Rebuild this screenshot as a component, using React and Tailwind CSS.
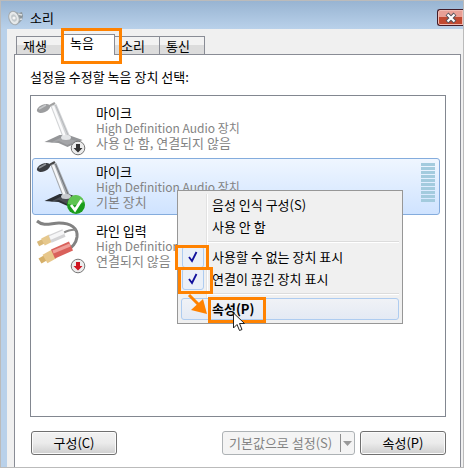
const devices = [
  { id: 'mic-off', name: '마이크', driver: 'High Definition Audio 장치', status: '사용 안 함, 연결되지 않음', kind: 'mic', badge: 'disabled' },
  { id: 'mic', name: '마이크', driver: 'High Definition Audio 장치', status: '기본 장치', kind: 'mic', badge: 'default', selected: true },
  { id: 'line', name: '라인 입력', driver: 'High Definition Audio 장치', status: '연결되지 않음', kind: 'line', badge: 'unplugged' },
]

function SoundIcon() {
  return (
    <svg className="h-4 w-4" viewBox="0 0 16 16" aria-hidden="true">
      <path d="M7 2l4 1 3-1 1 4-1 4-3 3-4 1z" fill="#8d969b" />
      <path d="M10 4l4 1M10 10l4-1" stroke="#dfe3e5" strokeWidth="1.5" />
      <ellipse cx="6" cy="8" rx="5" ry="7" transform="rotate(-20 6 8)" fill="#e6e9ea" stroke="#a2a9ad" />
      <ellipse cx="6" cy="8" rx="2.6" ry="3.8" transform="rotate(-20 6 8)" fill="#c3c9cc" />
      <circle cx="6" cy="8" r="1.6" fill="#f6f6f6" />
    </svg>
  )
}

function Badge({ type }) {
  if (type === 'default') {
    return (
      <g>
        <circle cx="40" cy="46" r="9" fill="#1a9c1c" />
        <path d="M32 45a8 8 0 0 1 16-2q-7 5-16 2z" fill="#5fc452" />
        <path d="M35 46l4 5 6.5-10" fill="none" stroke="#fff" strokeWidth="2.8" />
      </g>
    )
  }
  return (
    <g>
      <circle cx="42" cy="48" r="6.8" fill="#ececec" stroke="#777" />
      <path
        d="M40 44h4v4h2.500l-4.500 4.500-4.500-4.500h2.500z"
        fill={type === 'unplugged' ? '#cf1420' : '#333'}
      />
    </g>
  )
}

function Mic({ faded }) {
  return (
    <g opacity={faded ? 0.5 : 1}>
      <path d="M8.500 42l15-7 9 0 14 5-15 7-9-4z" fill="#2b2e33" />
      <path d="M14 43l10-5 9 1 8 2-10 4-8-4z" fill="#4b4e54" />
      <path d="M10 8l9-5" stroke="#444" strokeWidth="2.500" />
      <path d="M14.500 6l6-2 13 31q-3 4-7 2z" fill="#a6aaae" />
      <path d="M17 6l12 31" stroke="#f6f7f8" strokeWidth="2.500" />
      <path d="M19.500 5l12.500 30" stroke="#70747a" strokeWidth="1" />
      <ellipse cx="7.500" cy="8.500" rx="7" ry="3.800" transform="rotate(-24 7.500 8.500)" fill="#3b3d41" />
      <path d="M3 9l7-4" stroke="#8c9095" strokeWidth="1.500" />
      <ellipse cx="30" cy="37.500" rx="5" ry="2.500" fill="#c9ccd0" />
    </g>
  )
}

function Line() {
  return (
    <g fill="none">
      <path d="M1 3c7 6 14 2 22 2 12 0 19 5 18 14-1 7-5 10-10 14" stroke="#828282" strokeWidth="3" />
      <path d="M27 15q8-4 13-3" stroke="#8c8c8c" strokeWidth="2" />
      <path d="M2 26l6-3" stroke="#d9b878" strokeWidth="5" />
      <path d="M7 24l8-4" stroke="#e6c88d" strokeWidth="8" />
      <path d="M14 21l14-6" stroke="#d4d4d6" strokeWidth="8" />
      <path d="M14 20l14-6" stroke="#f6f6f7" strokeWidth="4" />
      <path d="M4 43l7-4" stroke="#d6b069" strokeWidth="6" />
      <path d="M9 41l9-5" stroke="#e7c78b" strokeWidth="10" />
      <path d="M17 36l18-8" stroke="#d9615b" strokeWidth="10" />
      <path d="M17 34l17-7" stroke="#efa09a" strokeWidth="3" />
    </g>
  )
}

function DeviceIcon({ kind, badge }) {
  return (
    <svg className="h-14 w-13 shrink-0" viewBox="0 0 52 56" aria-hidden="true">
      {kind === 'mic' ? <Mic faded={badge === 'disabled'} /> : <Line />}
      <Badge type={badge} />
    </svg>
  )
}

function LevelMeter() {
  return (
    <div className="mt-1 mr-1 flex w-[14px] flex-col gap-px">
      {Array.from({ length: 10 }, (_, i) => (
        <span key={i} className="h-[3px] bg-[#a3cbde]" />
      ))}
    </div>
  )
}

function Device({ device, children }) {
  return (
    <li
      className={`relative flex h-[57px] rounded-[3px] border pl-[3px] ${
        device.selected ? 'border-[#84acdd] bg-linear-to-b from-[#eff6ff] to-[#cfe3ff]' : 'border-transparent'
      }`}
    >
      <DeviceIcon kind={device.kind} badge={device.badge} />
      <div className="flex-1 pt-[5px] pl-2 leading-[15px] whitespace-nowrap text-[#838383]">
        <p className="text-black">{device.name}</p>
        <p className="text-[12px] leading-[15px]">{device.driver}</p>
        <p>{device.status}</p>
      </div>
      {device.selected && <LevelMeter />}
      {children}
    </li>
  )
}

function Highlight({ className }) {
  return <span className={`pointer-events-none absolute z-10 border-[3px] border-[#ff8200] ${className}`} />
}

function MenuItem({ children, checked, bold, mark }) {
  return (
    <button
      type="button"
      role={checked ? 'menuitemcheckbox' : 'menuitem'}
      aria-checked={checked}
      className={`relative flex h-[22px] w-full items-center rounded-[3px] border text-left ${
        bold ? 'border-[#aeccf0] bg-linear-to-b from-[#f0f2f6] to-[#e4eaf4] font-bold' : 'border-transparent'
      }`}
    >
      <span className="flex w-[30px] shrink-0 justify-center">
        {checked && (
          <span className="mr-2 flex h-[22px] w-[22px] shrink-0 items-center justify-center rounded-[3px] border border-[#aeccf0] bg-[#eaf0f8]">
            <svg className="h-3 w-3" viewBox="0 0 12 12" aria-hidden="true">
              <path d="M2 6l3 4 4.500-9" fill="none" stroke="#10109c" strokeWidth="1.800" />
            </svg>
          </span>
        )}
      </span>
      {children}
      {mark}
    </button>
  )
}

function Separator() {
  return <div role="separator" className="my-[3px] ml-[27px] h-[2px] border-t border-[#dcdcdc] bg-white" />
}

function ContextMenu() {
  return (
    <div
      role="menu"
      className="absolute top-[31px] left-[144px] z-20 w-[226px] border border-[#979797] bg-[#f0f0f0] p-[3px] text-black"
    >
      <span className="absolute top-[3px] bottom-[3px] left-[28px] w-[2px] border-l border-[#e2e2e2] bg-white" />
      <MenuItem>음성 인식 구성(S)</MenuItem>
      <MenuItem>사용 안 함</MenuItem>
      <Separator />
      <MenuItem checked mark={<Highlight className="-top-[2px] -left-[7px] h-[25px] w-[34px]" />}>
        사용할 수 없는 장치 표시
      </MenuItem>
      <MenuItem checked mark={<Highlight className="-top-[2px] -left-[4px] h-[27px] w-[35px]" />}>
        연결이 끊긴 장치 표시
      </MenuItem>
      <Separator />
      <MenuItem
        bold
        mark={
          <>
            <Highlight className="-top-[2px] left-[26px] h-[26px] w-[58px]" />
            <svg className="absolute -top-[6px] left-[4px] z-10 h-6 w-6" viewBox="0 0 24 24" aria-hidden="true">
              <path d="M3 2l11 11" stroke="#ff8200" strokeWidth="3" />
              <path d="M17 6l4 15-16-4z" fill="#ff8200" />
            </svg>
            <svg className="absolute top-[13px] left-[51px] z-20 h-5 w-3" viewBox="0 0 12 20" aria-hidden="true">
              <path d="M.500 1v15l3.500-3.500 2.500 6 2.500-1-2.500-6h5z" fill="#fff" stroke="#222" />
            </svg>
          </>
        }
      >
        속성(P)
      </MenuItem>
    </div>
  )
}

function Tab({ children, active }) {
  return (
    <button
      type="button"
      role="tab"
      aria-selected={Boolean(active)}
      className={`relative border border-b-0 border-[#898c95] not-first:-ml-px ${
        active
          ? 'z-10 -mb-px h-[21px] w-[54px] bg-white pr-3 pb-1'
          : 'h-[18px] w-[46px] bg-linear-to-b from-[#f2f2f2] from-50% to-[#dcdcdc] to-50% pr-2'
      }`}
    >
      {children}
      {active && <Highlight className="-top-[7px] -left-[1px] h-9 w-[61px]" />}
    </button>
  )
}

const pushButton =
  'h-6 w-[86px] rounded-[3px] border border-[#707070] bg-linear-to-b from-[#f2f2f2] from-0% via-[#ebebeb] via-50% to-[#cfcfcf] shadow-[inset_0_0_0_1px_#fbfbfb]'

export default function App() {
  return (
    <main className="flex h-screen flex-col overflow-hidden border border-[#bbb] bg-[#f0f0f0] font-['Noto_Sans_CJK_KR',sans-serif] text-[13px] leading-4 text-black">
      <header className="flex h-7 shrink-0 items-center justify-between bg-linear-to-b from-[#98b4d2] to-[#b9d1ea] pt-[5px] pl-[7px]">
        <h1 className="flex items-center gap-[6px]">
          <SoundIcon />
          소리
        </h1>
        <button
          type="button"
          aria-label="닫기"
          className="flex h-[17px] w-[26px] items-center justify-center rounded-l-[3px] border border-r-0 border-[#431c28] bg-linear-to-b from-[#e8a096] from-50% to-[#c14a32] to-50% shadow-[inset_0_0_0_1px_#f0bbb3]"
        >
          <svg className="h-3 w-3" viewBox="0 0 12 12" aria-hidden="true">
            <path d="M2 2l8 8M10 2l-8 8" stroke="#54535c" strokeWidth="4" />
            <path d="M2.500 2.500l7 7M9.500 2.500l-7 7" stroke="#fff" strokeWidth="2.200" />
          </svg>
        </button>
      </header>

      <div className="flex flex-1 flex-col border-l-[6px] border-[#b9d1ea] pt-[5px] pr-[2px] pl-[7px]">
        <div role="tablist" className="flex items-end pl-[2px]">
          <Tab>재생</Tab>
          <Tab active>녹음</Tab>
          <Tab>소리</Tab>
          <Tab>통신</Tab>
        </div>

        <section className="flex flex-1 flex-col border border-b-0 border-[#898c95] bg-white pt-[14px] pr-[14px] pb-3 pl-[15px]">
          <p>설정을 수정할 녹음 장치 선택:</p>
          <ul className="mt-[10px] flex flex-1 flex-col gap-[2px] border border-[#828790] py-[3px] pr-[5px] pl-px">
            {devices.map((device) => (
              <Device key={device.id} device={device}>
                {device.selected && <ContextMenu />}
              </Device>
            ))}
          </ul>
          <footer className="mt-[14px] flex justify-between pl-px">
            <button type="button" className={pushButton}>구성(C)</button>
            <div className="flex gap-[5px]">
              <button
                type="button"
                disabled
                className="flex h-6 w-[133px] items-center rounded-[3px] border border-[#adb2b5] bg-[#f4f4f4] pl-[6px] text-[#838383]"
              >
                <span className="flex-1 text-left whitespace-nowrap">기본값으로 설정(S)</span>
                <span className="flex h-[18px] w-[14px] items-center justify-center border-l border-[#8f8f8f]">
                  <svg className="h-[5px] w-[9px]" viewBox="0 0 9 5" aria-hidden="true">
                    <path d="M0 0h9L4.500 5z" fill="#999" />
                  </svg>
                </span>
              </button>
              <button type="button" className={pushButton}>속성(P)</button>
            </div>
          </footer>
        </section>
      </div>
    </main>
  )
}
